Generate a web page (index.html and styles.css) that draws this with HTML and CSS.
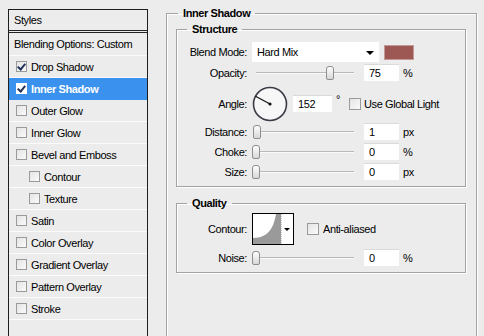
FILE: index.html
```html
<!DOCTYPE html>
<html lang="en">
<head>
    <meta charset="UTF-8">
    <title>Layer Style - Inner Shadow</title>
    <link rel="stylesheet" href="styles.css">
</head>
<body>
    <div class="dialog">
        <div class="styles-list">
            <div class="list-head">Styles</div>
            <div class="list-item blend-item">Blending Options: Custom</div>
            <div class="list-item"><span class="check on"></span>Drop Shadow</div>
            <div class="list-item active"><span class="check on"></span>Inner Shadow</div>
            <div class="list-item"><span class="check"></span>Outer Glow</div>
            <div class="list-item"><span class="check"></span>Inner Glow</div>
            <div class="list-item"><span class="check"></span>Bevel and Emboss</div>
            <div class="list-item sub"><span class="check"></span>Contour</div>
            <div class="list-item sub"><span class="check"></span>Texture</div>
            <div class="list-item"><span class="check"></span>Satin</div>
            <div class="list-item"><span class="check"></span>Color Overlay</div>
            <div class="list-item"><span class="check"></span>Gradient Overlay</div>
            <div class="list-item"><span class="check"></span>Pattern Overlay</div>
            <div class="list-item"><span class="check"></span>Stroke</div>
        </div>

        <fieldset class="group outer">
            <legend>Inner Shadow</legend>

            <fieldset class="group structure">
                <legend>Structure</legend>

                <div class="row">
                    <label class="lbl">Blend Mode:</label>
                    <div class="select">Hard Mix<span class="arrow"></span></div>
                    <span class="swatch"></span>
                </div>

                <div class="row opacity-row">
                    <label class="lbl">Opacity:</label>
                    <div class="slider"><span class="thumb" style="left: 74px"></span></div>
                    <div class="num">75</div>
                    <span class="unit">%</span>
                </div>

                <div class="row angle-row">
                    <label class="lbl">Angle:</label>
                    <svg class="dial" width="36" height="36" viewBox="0 0 36 36">
                        <circle cx="18" cy="18" r="16.5" fill="#f7f7f7" stroke="#3c3c48" stroke-width="1.6"/>
                        <line x1="18" y1="18" x2="3.5" y2="10.3" stroke="#111" stroke-width="1.2"/>
                        <circle cx="18" cy="18" r="1.6" fill="#111"/>
                    </svg>
                    <div class="num wide">152</div>
                    <span class="unit deg">°</span>
                    <span class="check box-lg"></span>
                    <span class="chk-text">Use Global Light</span>
                </div>

                <div class="row">
                    <label class="lbl">Distance:</label>
                    <div class="slider"><span class="thumb" style="left: 1px"></span></div>
                    <div class="num">1</div>
                    <span class="unit">px</span>
                </div>

                <div class="row">
                    <label class="lbl">Choke:</label>
                    <div class="slider"><span class="thumb" style="left: 0px"></span></div>
                    <div class="num">0</div>
                    <span class="unit">%</span>
                </div>

                <div class="row">
                    <label class="lbl">Size:</label>
                    <div class="slider"><span class="thumb" style="left: 0px"></span></div>
                    <div class="num">0</div>
                    <span class="unit">px</span>
                </div>
            </fieldset>

            <fieldset class="group quality">
                <legend>Quality</legend>

                <div class="row contour-row">
                    <label class="lbl">Contour:</label>
                    <div class="contour">
                        <svg width="40" height="30" viewBox="0 0 40 30">
                            <rect x="0" y="0" width="28" height="30" fill="#fff"/>
                            <path d="M0 30 L0 24 C8 24 14 21 18 15 C21 10 22 5 23 0 L28 0 L28 30 Z" fill="#9a9a9a"/>
                            <rect x="28" y="0" width="12" height="30" fill="#fff"/>
                            <line x1="28.5" y1="0" x2="28.5" y2="30" stroke="#c8c8c8" stroke-dasharray="1 1"/>
                            <path d="M31 14 L37 14 L34 17 Z" fill="#000"/>
                        </svg>
                    </div>
                    <span class="check box-lg aa"></span>
                    <span class="chk-text">Anti-aliased</span>
                </div>

                <div class="row noise-row">
                    <label class="lbl">Noise:</label>
                    <div class="slider"><span class="thumb" style="left: 0px"></span></div>
                    <div class="num">0</div>
                    <span class="unit">%</span>
                </div>
            </fieldset>
        </fieldset>
    </div>
</body>
</html>
```

FILE: styles.css
```css
body {
    margin: 0;
    padding: 9px 0 0 8px;
    background-color: #ececec;
    font-family: "Liberation Sans", Arial, sans-serif;
    font-size: 11px;
    letter-spacing: -0.4px;
    color: #000;
    overflow: hidden;
}
.dialog {
    display: flex;
    align-items: flex-start;
}

/* left list */
.styles-list {
    width: 138px;
    height: 340px;
    border: 1px solid #1e1e1e;
    background-color: #ececec;
    flex-shrink: 0;
}
.list-head {
    height: 20px;
    line-height: 20px;
    padding-left: 5px;
    border-bottom: 3px double #222;
}
.list-item {
    display: flex;
    align-items: center;
    height: 21px;
    padding-left: 7px;
    border-bottom: 1px solid #fbfbfb;
}
.list-item.blend-item {
    height: 22px;
    padding-left: 5px;
}
.list-item.sub {
    padding-left: 20px;
}
.list-item.active {
    background-color: #3a92ee;
    color: #fff;
    font-weight: bold;
    border-bottom-color: #3a92ee;
}

.check {
    width: 9px;
    height: 9px;
    margin-right: 4px;
    border: 1px solid #9a9a9a;
    background: linear-gradient(135deg, #e4e4e4, #fafafa);
    position: relative;
    flex-shrink: 0;
}
.check.on::after {
    content: "";
    position: absolute;
    left: 2px;
    top: 0px;
    width: 3px;
    height: 6px;
    border: solid #21335a;
    border-width: 0 2px 2px 0;
    transform: rotate(40deg);
}
.active .check {
    background: #fff;
    border-color: #fff;
}

/* fieldsets */
.group {
    margin: 0;
    border: 1px solid #a2a2a2;
    box-shadow: inset 1px 1px 0 #fff, 1px 1px 0 #fff;
}
.group legend {
    font-weight: bold;
    line-height: 13px;
    padding: 0 5px;
}
.outer {
    width: 290px;
    height: 340px;
    margin: -2px 0 0 18px;
    padding: 3px 10px 0 9px;
}
.outer > legend {
    margin-left: 2px;
}
.structure, .quality {
    padding: 6px 0 4px 0;
}
.structure legend, .quality legend {
    margin-left: 10px;
}
.quality {
    margin-top: 10px;
    padding-top: 3px;
}

/* control rows */
.row {
    display: flex;
    align-items: center;
    height: 20px;
}
.opacity-row {
    margin-top: 1px;
}
.angle-row {
    height: 36px;
    margin-top: 3px;
}
.contour-row {
    height: 32px;
}
.noise-row {
    margin-top: 3px;
}
.lbl {
    width: 70px;
    margin-right: 5px;
    text-align: right;
}

.select {
    width: 122px;
    height: 20px;
    line-height: 20px;
    padding-left: 5px;
    background-color: #fff;
    border-right: 1px solid #f0f0f0;
    position: relative;
}
.arrow {
    position: absolute;
    right: 5px;
    top: 9px;
    border-left: 4px solid transparent;
    border-right: 4px solid transparent;
    border-top: 4px solid #000;
}
.swatch {
    width: 28px;
    height: 13px;
    margin-left: 4px;
    background-color: #9d5853;
    border: 1px solid #c49a97;
}

.slider {
    width: 102px;
    height: 16px;
    margin-right: 10px;
    position: relative;
}
.slider::before {
    content: "";
    position: absolute;
    left: 4px;
    right: 0;
    top: 7px;
    border-top: 1px solid #b9b9b9;
    border-bottom: 1px solid #fafafa;
}
.thumb {
    position: absolute;
    top: 1px;
    width: 6px;
    height: 12px;
    border: 1px solid #8e8e8e;
    border-radius: 3px 3px 2px 2px;
    background: linear-gradient(#fdfdfd, #d8d8d8);
}

.num {
    width: 30px;
    height: 16px;
    line-height: 16px;
    padding-left: 5px;
    background-color: #fff;
    border-top: 1px solid #dadada;
    box-sizing: content-box;
    margin-top: -1px;
}
.num.wide {
    width: 34px;
}
.unit {
    margin-left: 4px;
}
.unit.deg {
    align-self: flex-start;
    margin-top: 7px;
}

.dial {
    margin-right: 5px;
}
.box-lg {
    width: 10px;
    height: 10px;
    margin-left: 9px;
    margin-right: 3px;
}
.aa {
    margin-left: 13px;
    margin-right: 4px;
}

.contour {
    width: 40px;
    height: 30px;
    border: 1px solid #000;
}
.contour svg {
    display: block;
}
```
